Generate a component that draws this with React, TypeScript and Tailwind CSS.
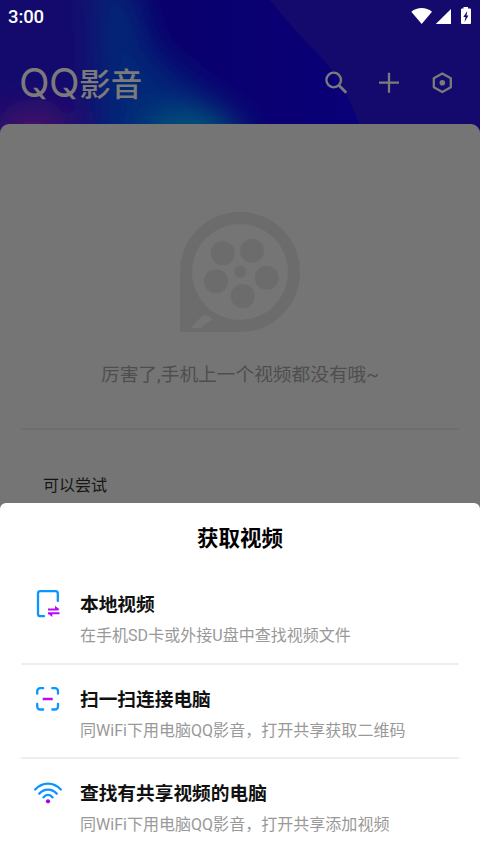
import type { ReactNode } from "react";

const StatusBar = () => (
  <div className="flex h-[34px] items-center justify-between pl-2 pr-[9px] text-white">
    <span className="font-[Roboto] text-[18.500px] font-medium leading-[34px] tracking-[-0.1px]">
      3:00
    </span>
    <svg width="60" height="20" viewBox="0 0 60 20" fill="currentColor">
      <path d="M.3 4.7C6.300-.3 15 -.3 21 4.700L10.700 17z" />
      <path d="M40 2v15H24.800z" />
      <path d="M52.500 0h4.500v1.500h2a1 1 0 0 1 1 1V16a1 1 0 0 1-1 1h-8a1 1 0 0 1-1-1V2.500a1 1 0 0 1 1-1h1.500z" />
      <path d="M56.300 4l-4 6h2.200l-1 5 4-6.500h-2z" fill="#140a6e" />
    </svg>
  </div>
);

const Header = () => (
  <header className="flex h-[98px] items-start justify-between pl-[19px] pr-[25px] pt-[28px] text-[#7b7b7b]">
    <h1 className="flex items-center leading-[42px]">
      <span className="font-[Inter] text-[40px] font-normal tracking-[-0.5px]">
        QQ
      </span>
      <span className="-mt-[3px] font-['Noto_Sans_CJK_SC',sans-serif] text-[31.500px] font-medium">
        影音
      </span>
    </h1>
    <div className="flex gap-[27px] pt-[8px]">
      <svg width="26" height="26" viewBox="0 0 26 26" fill="none" stroke="currentColor" strokeWidth="2.300">
        <circle cx="10.700" cy="10" r="7.300" />
        <path d="M15.800 15.300L23.300 22.800" strokeWidth="2.700" />
      </svg>
      <svg width="26" height="26" viewBox="0 0 26 26" fill="none" stroke="currentColor" strokeWidth="2.300">
        <path d="M3 12.700h20M13 2.700v20" />
      </svg>
      <svg width="26" height="26" viewBox="0 0 26 26" fill="none" stroke="currentColor" strokeWidth="2.300">
        <path d="M13.300 3.600l8.500 4.700v9L13.300 22l-8.500-4.700v-9z" strokeLinejoin="round" />
        <circle cx="13.300" cy="12.800" r="2.800" fill="currentColor" stroke="none" />
      </svg>
    </div>
  </header>
);

const FilmReel = () => (
  <svg width="120" height="120" viewBox="0 0 120 120" fill="#6c6c6c">
    <path d="M60 0a60 60 0 0 1 0 120H2.500A2.500 2.500 0 0 1 0 117.500V60A60 60 0 0 1 60 0z" />
    <circle cx="60" cy="60" r="48" fill="#757575" />
    <circle cx="42.700" cy="41.300" r="12" />
    <circle cx="72" cy="38.700" r="12" />
    <circle cx="36" cy="69.300" r="12" />
    <circle cx="86.700" cy="65.700" r="12" />
    <circle cx="62.700" cy="84" r="12" />
    <circle cx="60.300" cy="59.700" r="6.200" />
    <path d="M10.700 116Q17 107 25.700 102.700L32.700 107.300Q25.500 111 21 116z" fill="#757575" />
  </svg>
);

const LocalIcon = () => (
  <svg width="28" height="28" viewBox="0 0 28 28" fill="none" strokeWidth="2.300" strokeLinecap="round">
    <path d="M10 26.200H6.300a2.300 2.300 0 0 1-2.300-2.300V3.500a2.300 2.300 0 0 1 2.300-2.300h15.200a2.300 2.300 0 0 1 2.300 2.300v7.500" stroke="#0a96ff" />
    <path d="M14 19.500h10.500M14 23.200h11.500" stroke="#b80af5" strokeWidth="2" strokeLinecap="butt" />
    <path d="M21 15.700v3.800h4.700zM18.300 27v-3.800h-4.700z" fill="#b80af5" />
  </svg>
);

const ScanIcon = () => (
  <svg width="28" height="28" viewBox="0 0 28 28" fill="none" strokeWidth="2.300" strokeLinecap="round">
    <path d="M3.200 8.700V6.200a3 3 0 0 1 3-3h3M18.300 3.200h2.700a3 3 0 0 1 3 3v2.500M24 18.800v2.700a3 3 0 0 1-3 3h-2.700M9.200 24.500h-3a3 3 0 0 1-3-3v-2.700" stroke="#0a96ff" />
    <path d="M8.700 14h10" stroke="#b80af5" strokeLinecap="butt" />
  </svg>
);

const WifiIcon = () => (
  <svg width="28" height="28" viewBox="0 0 28 28" fill="none" stroke="#0a96ff" strokeWidth="2.300" strokeLinecap="round">
    <path d="M1.200 10.500C8.500 2.600 19.500 2.600 26.800 10.500M5.300 14.600c4.900-5.300 12.500-5.300 17.400 0M9.500 18.300c2.200-3.300 6.800-3.300 9 0" />
    <circle cx="14" cy="22.300" r="2.100" fill="#a800e8" stroke="none" />
  </svg>
);

type Option = {
  icon: ReactNode;
  title: string;
  description: string;
};

const options: Option[] = [
  {
    icon: <LocalIcon />,
    title: "本地视频",
    description: "在手机SD卡或外接U盘中查找视频文件",
  },
  {
    icon: <ScanIcon />,
    title: "扫一扫连接电脑",
    description: "同WiFi下用电脑QQ影音，打开共享获取二维码",
  },
  {
    icon: <WifiIcon />,
    title: "查找有共享视频的电脑",
    description: "同WiFi下用电脑QQ影音，打开共享添加视频",
  },
];

const OptionRow = ({ icon, title, description }: Option) => (
  <li className="flex h-[94.7px] border-b-2 border-[#eeeeee] pl-[13px] pt-5 last:border-0">
    <div className="mr-[18px] w-7 shrink-0">{icon}</div>
    <div className="whitespace-nowrap">
      <h3 className="text-[18.7px] font-bold leading-[30px] text-[#111111]">
        {title}
      </h3>
      <p className="mt-px text-[16.050px] leading-[30px] text-[#999999]">
        {description}
      </p>
    </div>
  </li>
);

const Sheet = () => (
  <section className="h-[351px] shrink-0 overflow-hidden rounded-t-[6px] bg-white px-[21px]">
    <h2 className="pt-[19px] text-center text-[21.500px] font-bold leading-[34px] text-black">
      获取视频
    </h2>
    <ul className="pt-[14px]">
      {options.map((option) => (
        <OptionRow key={option.title} {...option} />
      ))}
    </ul>
  </section>
);

export default function App() {
  return (
    <div className="flex h-[854px] w-[480px] flex-col overflow-hidden bg-[#757575] font-[Roboto,'Noto_Sans_CJK_SC',sans-serif]">
      <div className="relative h-[132px] shrink-0 overflow-hidden bg-[#140a6e]">
        <svg className="absolute inset-0" width="480" height="132">
          <defs>
            <filter id="soft" x="-50%" y="-50%" width="200%" height="200%">
              <feGaussianBlur stdDeviation="17" />
            </filter>
            <linearGradient id="deep">
              <stop offset="0.250" stopColor="#09006c" stopOpacity="0" />
              <stop offset="0.420" stopColor="#09006c" />
              <stop offset="1" stopColor="#0a0078" />
            </linearGradient>
          </defs>
          <path d="M0 0H270Q292 28 322 58Q346 84 362 132H0z" fill="url(#deep)" />
          <g filter="url(#soft)">
            <path d="M95 -20H130L150 50L215 105L260 160H100z" fill="#04307a" opacity="0.850" />
            <ellipse cx="192" cy="138" rx="48" ry="24" fill="#005a78" />
            <ellipse cx="33" cy="140" rx="38" ry="32" fill="#4c1266" />
          </g>
        </svg>
        <div className="relative">
          <StatusBar />
          <Header />
        </div>
      </div>
      <main className="relative -mt-2 flex h-[379px] shrink-0 flex-col items-center rounded-t-[9px] bg-[#757575] px-[21px] pt-[88px]">
        <FilmReel />
        <p className="mt-[27px] whitespace-nowrap text-[18.700px] leading-[32px] text-[#4e4e4e]">
          厉害了,手机上一个视频都没有哦~
        </p>
        <div className="mt-[37px] h-[2px] w-full shrink-0 bg-[#6e6e6e]" />
        <p className="mt-[42px] w-full pl-[22px] text-[16px] leading-[28px] text-[#161616]">
          可以尝试
        </p>
      </main>
      <Sheet />
    </div>
  );
}
